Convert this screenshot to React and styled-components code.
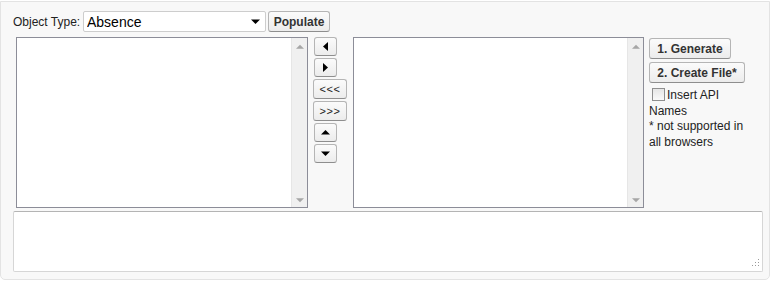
import React from "react";
import styled, { createGlobalStyle } from "styled-components";

const GlobalStyle = createGlobalStyle`
  body {
    margin: 0;
    background: #ffffff;
    font-family: "Liberation Sans", Arial, sans-serif;
  }
`;

function Triangle({ dir, size = 9, color = "#000" }) {
  const paths = {
    left: "M7 0 L7 9 L2 4.5 Z",
    right: "M2 0 L2 9 L7 4.5 Z",
    up: "M0 6.5 L9 6.5 L4.5 2 Z",
    down: "M0 2.5 L9 2.5 L4.5 7 Z",
  };
  return (
    <svg width={size} height={size} viewBox="0 0 9 9">
      <path d={paths[dir]} fill={color} />
    </svg>
  );
}

function ListBox({ width, offset }) {
  return (
    <List $width={width} $offset={offset}>
      <ListBody />
      <ScrollTrack>
        <Triangle dir="up" size={8} color="#a6a6a6" />
        <Triangle dir="down" size={8} color="#a6a6a6" />
      </ScrollTrack>
    </List>
  );
}

export default function App() {
  return (
    <>
      <GlobalStyle />
      <Panel>
        <Toolbar>
          <Label>Object Type:</Label>
          <SelectWrap>
            <Select defaultValue="Absence">
              <option>Absence</option>
            </Select>
            <SelectArrow>
              <Triangle dir="down" size={9} />
            </SelectArrow>
          </SelectWrap>
          <Button $width={62}>Populate</Button>
        </Toolbar>

        <Content>
          <ListBox width={292} offset={3} />
          <MoveColumn>
            <ArrowButton>
              <Triangle dir="left" />
            </ArrowButton>
            <ArrowButton>
              <Triangle dir="right" />
            </ArrowButton>
            <MoveAllButton>&lt;&lt;&lt;</MoveAllButton>
            <MoveAllButton>&gt;&gt;&gt;</MoveAllButton>
            <ArrowButton>
              <Triangle dir="up" />
            </ArrowButton>
            <ArrowButton>
              <Triangle dir="down" />
            </ArrowButton>
          </MoveColumn>
          <ListBox width={291} offset={6} />
          <ActionColumn>
            <Button $width={82}>1. Generate</Button>
            <Button $width={96}>2. Create File*</Button>
            <Note>
              <Check type="checkbox" />
              Insert API Names
              <br />* not supported in all browsers
            </Note>
          </ActionColumn>
        </Content>

        <OutputWrap>
          <Output />
          <Grip width="10" height="10" viewBox="0 0 10 10">
            <rect x="8" y="0" width="1" height="1" fill="#9a9a9a" />
            <rect x="8" y="3" width="1" height="1" fill="#9a9a9a" />
            <rect x="5" y="3" width="1" height="1" fill="#9a9a9a" />
            <rect x="8" y="6" width="1" height="1" fill="#9a9a9a" />
            <rect x="5" y="6" width="1" height="1" fill="#9a9a9a" />
            <rect x="2" y="6" width="1" height="1" fill="#9a9a9a" />
          </Grip>
        </OutputWrap>
      </Panel>
    </>
  );
}

const Panel = styled.div`
  box-sizing: border-box;
  width: 770px;
  height: 279px;
  margin-top: 1px;
  padding: 9px 6px 0 12px;
  background: #f8f8f8;
  border: 1px solid #e3e3e3;
  border-radius: 0 0 5px 5px;
`;

const Toolbar = styled.div`
  display: flex;
  align-items: center;
  height: 21px;
`;

const Label = styled.span`
  font-size: 12px;
  color: #222;
  width: 70px;
`;

const SelectWrap = styled.div`
  position: relative;
  width: 183px;
  height: 21px;
`;

const Select = styled.select`
  appearance: none;
  box-sizing: border-box;
  width: 100%;
  height: 100%;
  margin: 0;
  padding: 0 20px 0 3px;
  background: #fff;
  border: 1px solid #cdcdcd;
  border-radius: 2px;
  font-family: "Liberation Sans", Arial, sans-serif;
  font-size: 14px;
  color: #000;
  outline: none;
`;

const SelectArrow = styled.span`
  position: absolute;
  right: 6px;
  top: 6px;
  display: flex;
  pointer-events: none;
`;

const Button = styled.button`
  box-sizing: border-box;
  width: ${(p) => p.$width}px;
  height: 21px;
  margin: 0 0 0 2px;
  padding: 0;
  background: linear-gradient(#fbfbfb, #ececec);
  border: 1px solid #b5b5b5;
  border-bottom-color: #8e8e8e;
  border-radius: 3px;
  font-family: "Liberation Sans", Arial, sans-serif;
  font-size: 12px;
  font-weight: bold;
  color: #333;
`;

const Content = styled.div`
  display: flex;
  align-items: flex-start;
  margin-top: 5px;
`;

const List = styled.div`
  box-sizing: border-box;
  display: flex;
  width: ${(p) => p.$width}px;
  height: 171px;
  margin-left: ${(p) => p.$offset}px;
  background: #fff;
  border: 1px solid #8c8d98;
`;

const ListBody = styled.div`
  flex: 1;
`;

const ScrollTrack = styled.div`
  display: flex;
  flex-direction: column;
  justify-content: space-between;
  align-items: center;
  width: 15px;
  padding: 5px 0 3px;
  background: #f0f0f0;
  border-left: 1px solid #e6e6e6;
`;

const MoveColumn = styled.div`
  display: flex;
  flex-direction: column;
  align-items: flex-start;
  gap: 2px;
  width: 34px;
  margin-left: 5px;
`;

const ArrowButton = styled.button`
  box-sizing: border-box;
  display: flex;
  align-items: center;
  justify-content: center;
  width: 23px;
  height: 19px;
  margin-left: 1px;
  padding: 0;
  background: linear-gradient(#fbfbfb, #ececec);
  border: 1px solid #b5b5b5;
  border-bottom-color: #8e8e8e;
  border-radius: 3px;
`;

const MoveAllButton = styled(ArrowButton)`
  width: 34px;
  height: 20px;
  margin-left: 0;
  font-family: "Liberation Sans", Arial, sans-serif;
  font-size: 11px;
  color: #222;
  letter-spacing: 0.5px;
`;

const ActionColumn = styled.div`
  display: flex;
  flex-direction: column;
  align-items: flex-start;
  gap: 3px;
  width: 106px;
  margin-left: 3px;
  padding-top: 1px;
`;

const Note = styled.div`
  font-size: 12px;
  line-height: 15.5px;
  color: #222;
  margin: 2px 0 0 2px;
`;

const Check = styled.input`
  appearance: none;
  box-sizing: border-box;
  width: 13px;
  height: 13px;
  margin: 0 2px 0 3px;
  vertical-align: -2px;
  background: linear-gradient(#e6e6e6, #fafafa);
  border: 1px solid #8f8f8f;
`;

const OutputWrap = styled.div`
  position: relative;
  margin: 3px 0 0 0;
  width: 750px;
  height: 61px;
`;

const Output = styled.textarea`
  box-sizing: border-box;
  display: block;
  width: 100%;
  height: 100%;
  margin: 0;
  resize: none;
  background: #fff;
  border: 1px solid #d6d6d6;
  border-top-color: #b4b4b4;
  border-radius: 2px;
  outline: none;
`;

const Grip = styled.svg`
  position: absolute;
  right: 3px;
  bottom: 3px;
`;
